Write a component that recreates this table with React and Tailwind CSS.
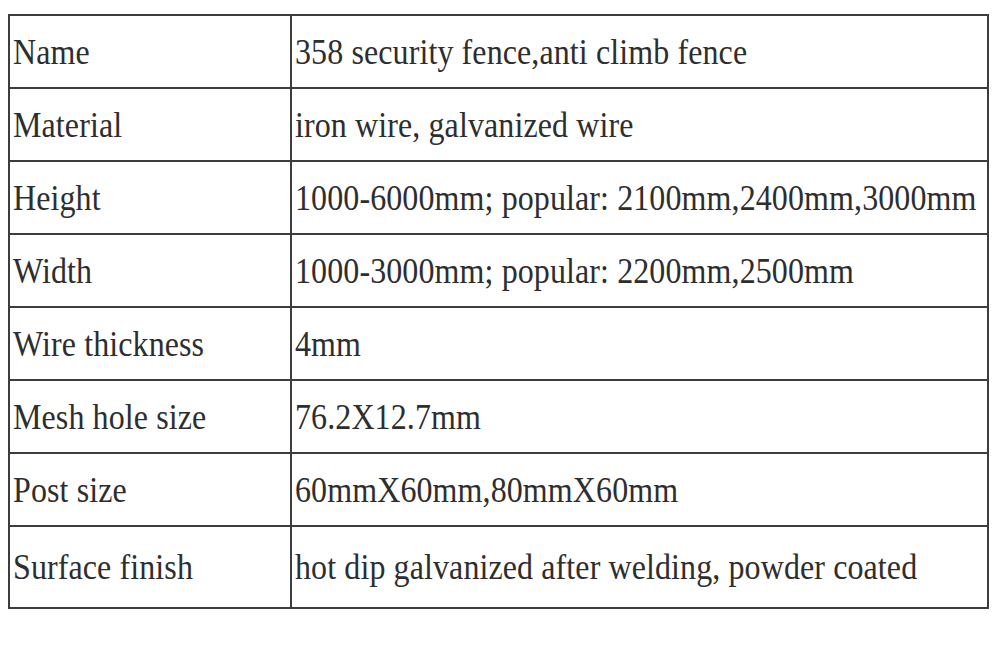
import React from 'react';

const rows = [
  ['Name', '358 security fence,anti climb fence'],
  ['Material', 'iron wire, galvanized wire'],
  ['Height', '1000-6000mm; popular: 2100mm,2400mm,3000mm'],
  ['Width', '1000-3000mm; popular: 2200mm,2500mm'],
  ['Wire thickness', '4mm'],
  ['Mesh hole size', '76.2X12.7mm'],
  ['Post size', '60mmX60mm,80mmX60mm'],
  ['Surface finish', 'hot dip galvanized after welding, powder coated'],
];

export default function App() {
  return (
    <div className="w-[1000px] h-[646px] bg-white pt-[14px] pl-[8px] overflow-hidden">
      <table
        className="w-[981px] border-collapse table-fixed text-[#2e2e2e] text-[32px] leading-none"
        style={{ fontFamily: '"Liberation Serif", "Times New Roman", serif' }}
      >
        <colgroup>
          <col className="w-[282px]" />
          <col />
        </colgroup>
        <tbody>
          {rows.map(([label, value], i) => (
            <tr key={label} className={i === rows.length - 1 ? 'h-[82px]' : 'h-[73px]'}>
              <td className="border-2 border-[#3d3d3d] pl-[3px] align-middle whitespace-nowrap">
                <span className="inline-block scale-y-[1.1] tracking-[0.1px]">{label}</span>
              </td>
              <td className="border-2 border-[#3d3d3d] pl-[3px] align-middle whitespace-nowrap">
                <span className="inline-block scale-y-[1.1] tracking-[0.1px]">{value}</span>
              </td>
            </tr>
          ))}
        </tbody>
      </table>
    </div>
  );
}
